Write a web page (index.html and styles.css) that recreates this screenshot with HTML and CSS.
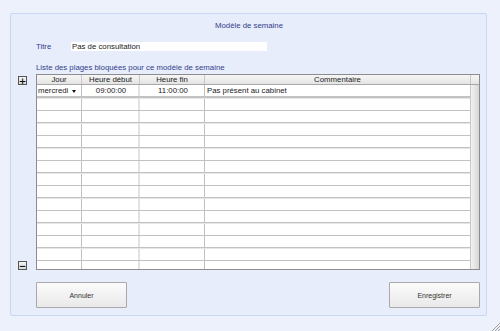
FILE: index.html
```html
<!DOCTYPE html>
<html lang="fr">
<head>
  <meta charset="UTF-8">
  <title>Modèle de semaine</title>
  <link rel="stylesheet" href="styles.css">
</head>
<body>

  <div class="panel">
    <h1 class="panel-title">Modèle de semaine</h1>

    <div class="field-row">
      <label class="field-label">Titre</label>
      <div class="field-input">Pas de consultation</div>
    </div>

    <div class="section-label">Liste des plages bloquées pour ce modèle de semaine</div>

    <div class="table-area">
      <div class="side-tools">
        <button class="tool-btn">+</button>
        <button class="tool-btn">&minus;</button>
      </div>

      <div class="grid">
        <div class="grid-head">
          <div class="head-cell">Jour</div>
          <div class="head-cell">Heure début</div>
          <div class="head-cell">Heure fin</div>
          <div class="head-cell">Commentaire</div>
          <div class="head-cell head-corner"></div>
        </div>
        <div class="grid-body">
          <div class="rows" id="rows">
            <div class="row first">
              <div class="cell cell-day">mercredi <span class="arrow"></span></div>
              <div class="cell center">09:00:00</div>
              <div class="cell center">11:00:00</div>
              <div class="cell">Pas présent au cabinet</div>
            </div>
          </div>
          <div class="scrollbar"></div>
        </div>
      </div>
    </div>

    <div class="actions">
      <button class="action-btn">Annuler</button>
      <button class="action-btn">Enregistrer</button>
    </div>
  </div>

  <svg class="grip" width="9" height="9" viewBox="0 0 9 9">
    <line x1="9" y1="1" x2="1" y2="9" stroke="#a0a0a0" stroke-width="1"/>
    <line x1="9" y1="4" x2="4" y2="9" stroke="#a0a0a0" stroke-width="1"/>
    <line x1="9" y1="7" x2="7" y2="9" stroke="#a0a0a0" stroke-width="1"/>
  </svg>

  <script>
    // empty rows under the first entry
    const rows = document.getElementById('rows');
    for (let i = 0; i < 14; i++) {
      const row = document.createElement('div');
      row.className = i % 2 === 0 ? 'row alt' : 'row';
      row.innerHTML = '<div class="cell"></div><div class="cell"></div><div class="cell"></div><div class="cell"></div>';
      rows.appendChild(row);
    }
  </script>

</body>
</html>
```

FILE: styles.css
```css
* {
  box-sizing: border-box;
}
body {
  font-family: 'Liberation Sans', Arial, sans-serif;
  font-size: 7.8px;
  margin: 0;
  padding: 13px 13px 0 10px;
  background-color: #edf1fc;
  color: #222;
  width: 500px;
  height: 331px;
  position: relative;
  overflow: hidden;
}
.panel {
  width: 477px;
  height: 303px;
  background-color: #e7edfb;
  border: 1px solid #c6d8f4;
  border-radius: 2px;
  padding: 7px 6px 0 7px;
}
.panel-title {
  font-size: 7.8px;
  font-weight: normal;
  color: #33408a;
  text-align: center;
  line-height: 10px;
  height: 10px;
  margin: 0;
}
.field-row {
  display: flex;
  align-items: center;
  margin-top: 11px;
  padding-left: 18px;
  height: 9px;
}
.field-label {
  width: 35px;
  color: #33408a;
}
.field-input {
  width: 196px;
  height: 9px;
  line-height: 9px;
  background: #fff;
  padding-left: 1px;
  color: #222;
}
.section-label {
  color: #33408a;
  margin-top: 12px;
  padding-left: 18px;
  line-height: 10px;
  height: 10px;
}
.table-area {
  display: flex;
  margin-top: 1px;
}
.side-tools {
  width: 18px;
  display: flex;
  flex-direction: column;
  justify-content: space-between;
}
.tool-btn {
  width: 9px;
  height: 9px;
  padding: 0;
  margin-top: 2px;
  border: 1px solid #555;
  background: linear-gradient(#f4f4f4, #d8d8d8);
  font-family: 'DejaVu Sans', sans-serif;
  font-size: 9px;
  font-weight: bold;
  line-height: 6px;
  color: #111;
  display: flex;
  align-items: center;
  justify-content: center;
}
.tool-btn:last-child {
  margin-top: 0;
}
.grid {
  width: 444px;
  height: 196px;
  border: 1px solid #8c8c8c;
  background: #fff;
  display: flex;
  flex-direction: column;
}
.grid-head,
.row {
  display: grid;
  grid-template-columns: 45px 58px 65px 266px;
}
.grid-head {
  grid-template-columns: 45px 58px 65px 266px 1fr;
  height: 10px;
  background: linear-gradient(#f6f6f6, #e4e4e4);
  border-bottom: 1px solid #a8a8a8;
}
.head-cell {
  text-align: center;
  line-height: 9px;
  border-right: 1px solid #c8c8c8;
  color: #222;
}
.head-corner {
  border-right: none;
}
.grid-body {
  flex: 1;
  display: flex;
  overflow: hidden;
}
.rows {
  flex: 1;
  overflow: hidden;
}
.row {
  height: 12.5px;
  border-bottom: 1px solid #c2c2c2;
}
.row.first {
  height: 13px;
  border-bottom: 2px solid #c2c2c2;
}
.row.alt {
  border-top: 1px solid #e6e6e6;
}
.cell {
  border-right: 1px solid #c0c0c0;
  line-height: 11px;
  padding-left: 2px;
  white-space: nowrap;
  overflow: hidden;
}
.cell:nth-child(2) {
  border-right: 2px solid #e2e2e2;
}
.cell:last-child {
  border-right: none;
}
.center {
  text-align: center;
}
.cell-day {
  position: relative;
  padding-left: 1px;
}
.arrow {
  position: absolute;
  right: 5px;
  top: 5px;
  border-left: 2.5px solid transparent;
  border-right: 2.5px solid transparent;
  border-top: 3px solid #111;
}
.scrollbar {
  width: 9px;
  border-left: 1px solid #c8c8c8;
  background: linear-gradient(90deg, #f2f2f2, #e2e2e2 60%, #d6d6d6);
}
.actions {
  display: flex;
  justify-content: space-between;
  margin-top: 12px;
  padding-left: 18px;
}
.action-btn {
  width: 91px;
  height: 26px;
  border: 1px solid #a9a9a9;
  border-radius: 1px;
  background: linear-gradient(#fbfbfb, #e9e9e9);
  font-family: 'Liberation Sans', Arial, sans-serif;
  font-size: 7px;
  color: #333;
  padding: 0;
}
.grip {
  position: absolute;
  right: 0;
  bottom: 0;
}
```
